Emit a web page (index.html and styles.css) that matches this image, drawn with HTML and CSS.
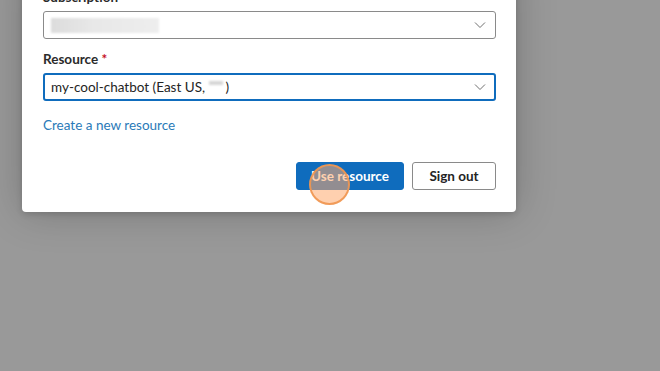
FILE: index.html
```html
<!DOCTYPE html>
<html lang="en">
  <head>
    <meta charset="UTF-8" />
    <meta name="viewport" content="width=device-width, initial-scale=1.0" />
    <title>Choose resource</title>
    <link rel="stylesheet" href="styles.css">
  </head>
  <body>
    <section class="dialog">
      <div class="field">
        <label class="label">Subscription</label>
        <div class="select">
          <span class="redacted"></span>
          <svg class="chevron" width="12" height="8" viewBox="0 0 12 8"><path d="M1 1.5 L6 6.5 L11 1.5" fill="none" stroke="#707070" stroke-width="1"/></svg>
        </div>
      </div>

      <div class="field">
        <label class="label">Resource <span class="req">*</span></label>
        <div class="select focused">
          <span class="value">my-cool-chatbot (East US, <span class="redacted small"></span>)</span>
          <svg class="chevron" width="12" height="8" viewBox="0 0 12 8"><path d="M1 1.5 L6 6.5 L11 1.5" fill="none" stroke="#707070" stroke-width="1"/></svg>
        </div>
      </div>

      <a class="link" href="#">Create a new resource</a>

      <div class="actions">
        <button class="btn primary" type="button">Use resource</button>
        <button class="btn secondary" type="button">Sign out</button>
        <span class="click"></span>
      </div>
    </section>
  </body>
</html>
```

FILE: styles.css
```css
body {
  margin: 0;
  padding: 0;
  height: 371px;
  overflow: hidden;
  background-color: #999999;
  font-family: Lato, "Noto Sans", sans-serif;
  font-size: 13.5px;
  color: #242424;
}

.dialog {
  width: 494px;
  margin: -33px 0 0 22px;
  padding: 20px 20px 22px 21px;
  box-sizing: border-box;
  background-color: #fff;
  border-radius: 0 0 4px 4px;
  box-shadow: 0 0 40px rgba(0, 0, 0, 0.22), 0 2px 6px rgba(0, 0, 0, 0.15);
  display: flex;
  flex-direction: column;
}

.field {
  display: flex;
  flex-direction: column;
  gap: 4px;
  margin-bottom: 10px;
}

.label {
  line-height: 20px;
  font-size: 13.5px;
  font-weight: 700;
  color: #2b2b2b;
}

.req {
  color: #c50f1f;
}

.select {
  height: 28px;
  box-sizing: border-box;
  border: 1px solid #8a8a8a;
  border-radius: 3px;
  display: flex;
  align-items: center;
  justify-content: space-between;
  padding: 0 9px 0 7px;
}

.select.focused {
  border: 2px solid #0f6cbd;
  padding-left: 6px;
  padding-right: 8px;
}

.value {
  display: flex;
  align-items: center;
  line-height: 20px;
  white-space: pre;
}

.redacted {
  display: block;
  width: 108px;
  height: 15px;
  background: linear-gradient(90deg, #dcdcdc, #e8e8e8 40%, #eeeeee);
  filter: blur(1px);
}

.redacted.small {
  display: inline-block;
  width: 14px;
  height: 4px;
  margin: 0 3px 8px 0;
  background: #d6d6d6;
}

.chevron {
  flex: none;
}

.link {
  margin-top: 4px;
  line-height: 20px;
  color: #2a7ab8;
  text-decoration: none;
  align-self: flex-start;
}

.actions {
  position: relative;
  display: flex;
  justify-content: flex-end;
  gap: 8px;
  margin-top: 27px;
}

.btn {
  height: 28px;
  padding: 0;
  font-family: inherit;
  font-size: 13.5px;
  font-weight: 700;
  white-space: nowrap;
  color: #242424;
  background-color: #fff;
  border: 1px solid #8a8a8a;
  border-radius: 3px;
  cursor: pointer;
}

.btn.primary {
  width: 108px;
  background-color: #0f6cbd;
  border-color: #0f6cbd;
  color: #fff;
}

.btn.secondary {
  width: 84px;
}

.click {
  position: absolute;
  left: 266px;
  top: 2px;
  width: 37px;
  height: 37px;
  border-radius: 50%;
  border: 2px solid rgba(240, 150, 80, 0.9);
  background-color: rgba(255, 170, 110, 0.55);
}
```
